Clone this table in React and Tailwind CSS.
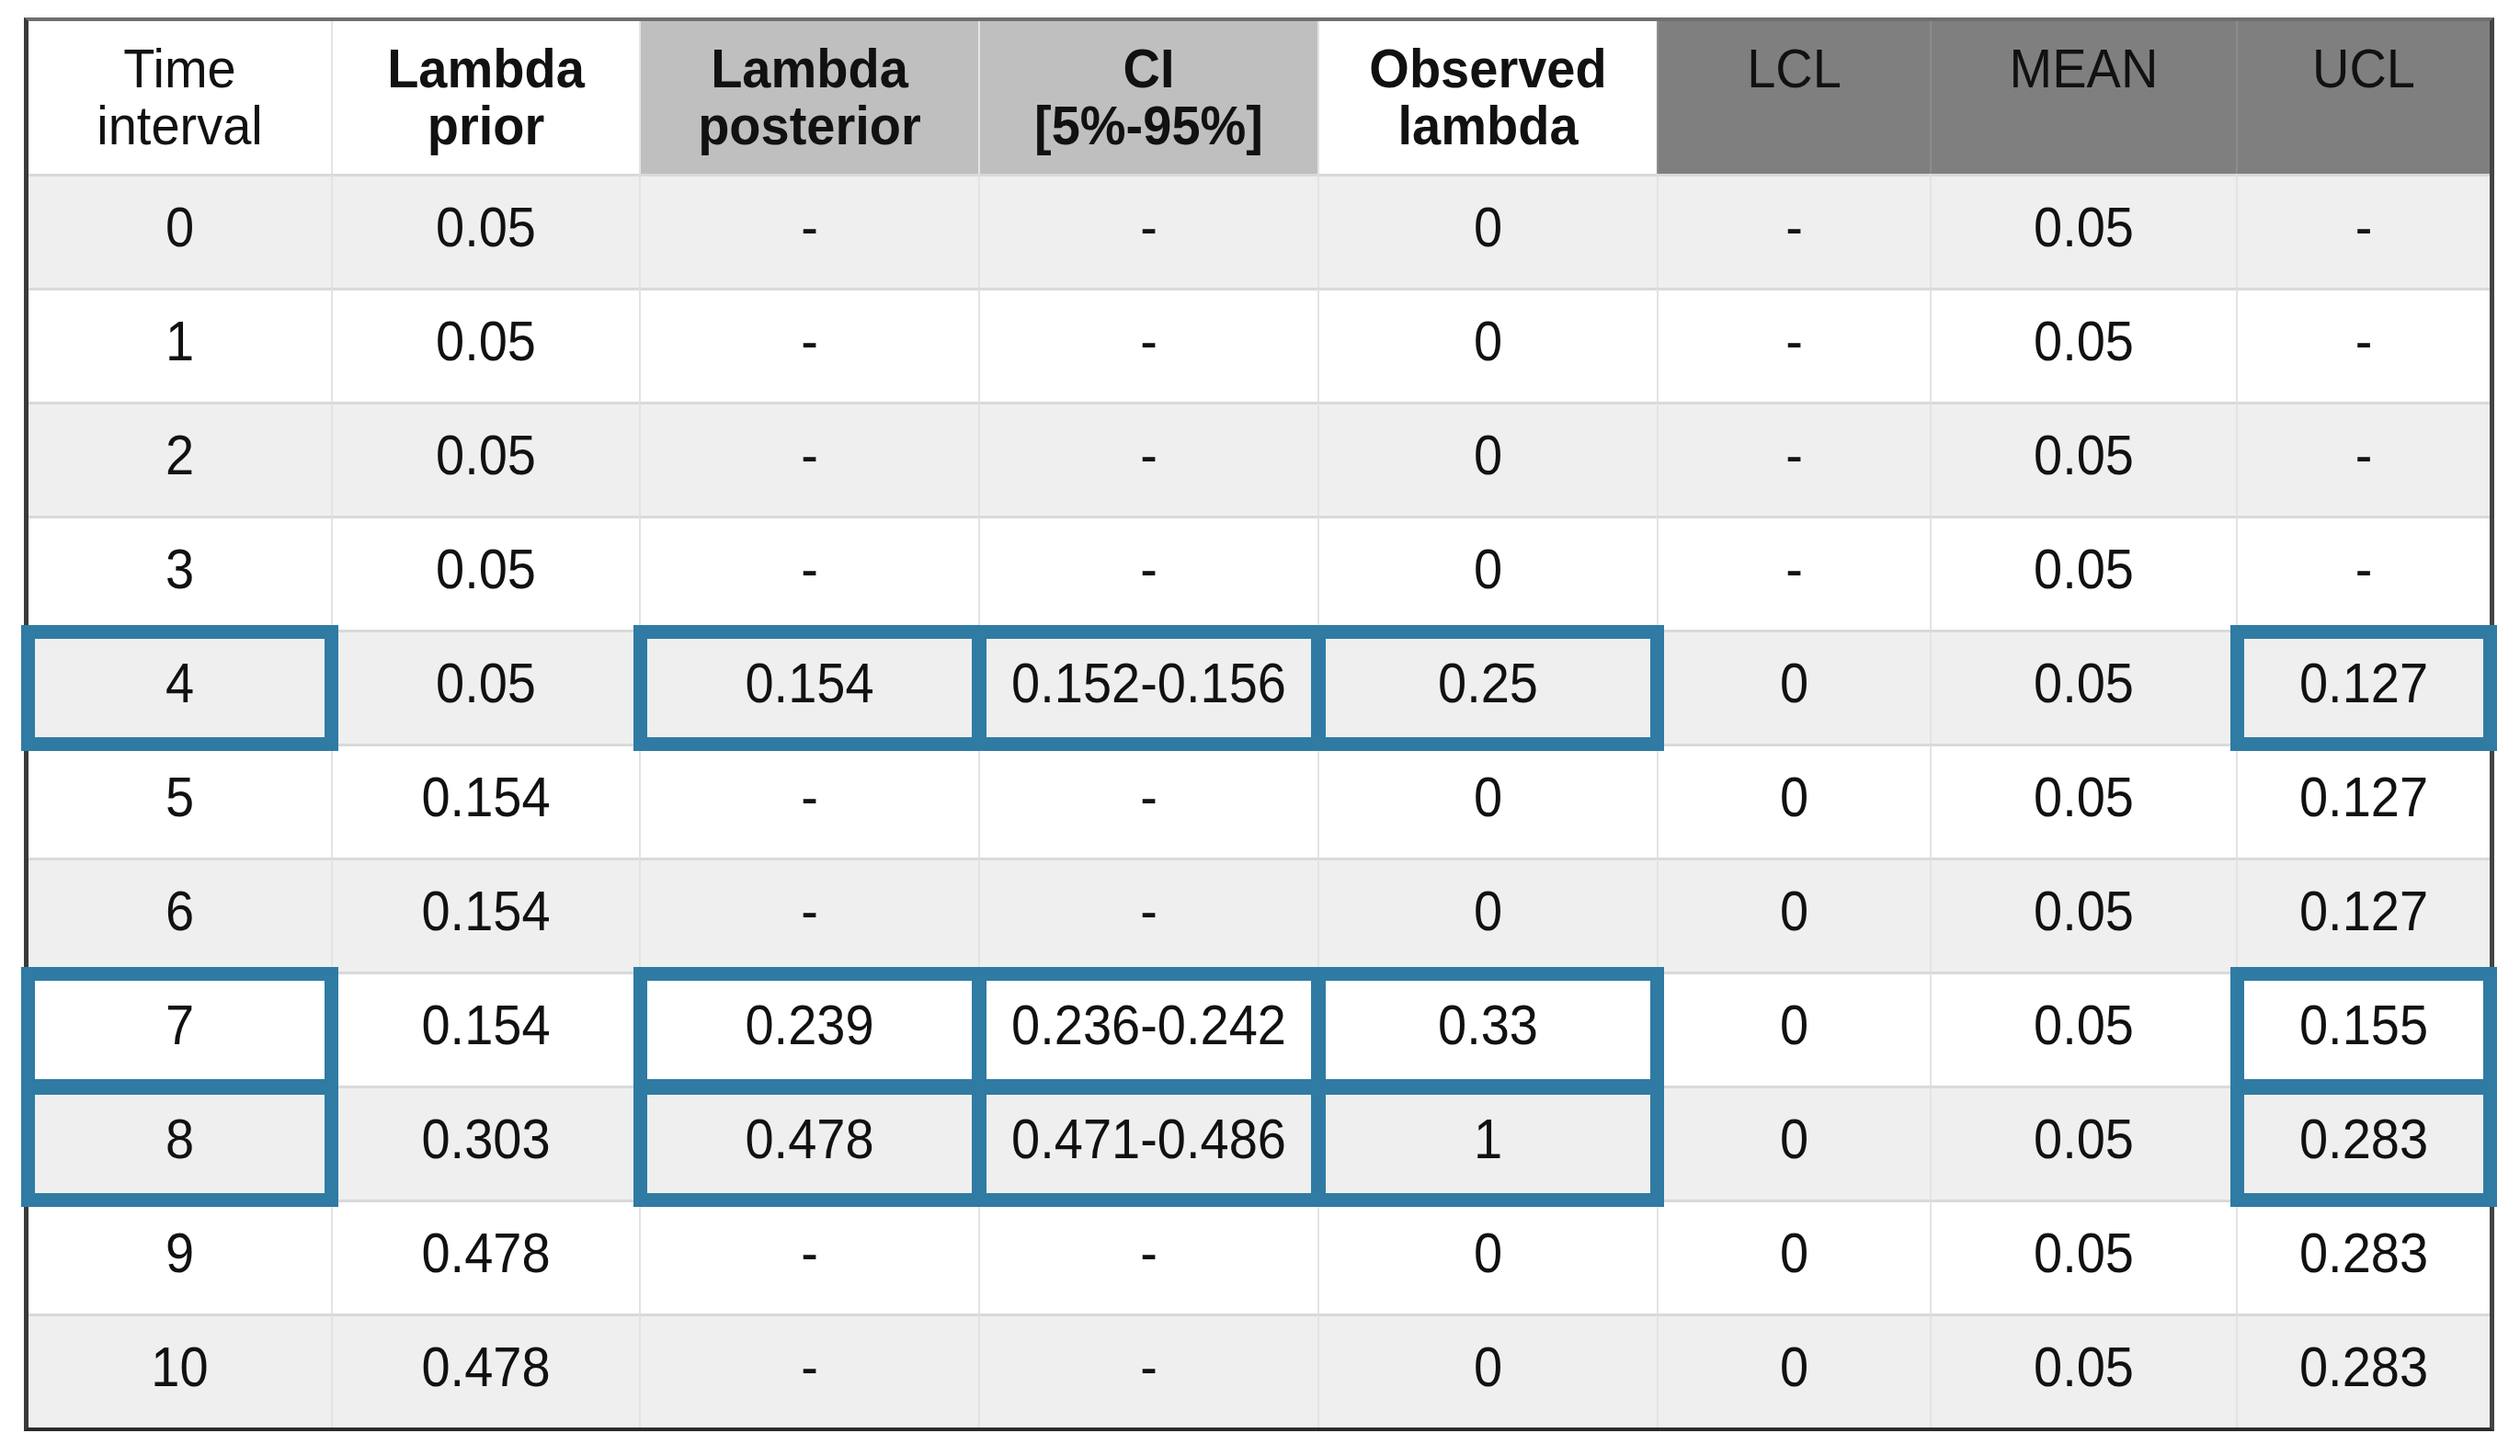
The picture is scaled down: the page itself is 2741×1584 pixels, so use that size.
import React from "react";

const columns = [
  { label: ["Time", "interval"], bold: false, bg: "bg-white" },
  { label: ["Lambda", "prior"], bold: true, bg: "bg-white" },
  { label: ["Lambda", "posterior"], bold: true, bg: "bg-[#bfbfbf]" },
  { label: ["CI", "[5%-95%]"], bold: true, bg: "bg-[#bfbfbf]" },
  { label: ["Observed", "lambda"], bold: true, bg: "bg-white" },
  { label: ["LCL"], bold: false, bg: "bg-[#7f7f7f]" },
  { label: ["MEAN"], bold: false, bg: "bg-[#7f7f7f]" },
  { label: ["UCL"], bold: false, bg: "bg-[#7f7f7f]" },
];

const rows = [
  ["0", "0.05", "-", "-", "0", "-", "0.05", "-"],
  ["1", "0.05", "-", "-", "0", "-", "0.05", "-"],
  ["2", "0.05", "-", "-", "0", "-", "0.05", "-"],
  ["3", "0.05", "-", "-", "0", "-", "0.05", "-"],
  ["4", "0.05", "0.154", "0.152-0.156", "0.25", "0", "0.05", "0.127"],
  ["5", "0.154", "-", "-", "0", "0", "0.05", "0.127"],
  ["6", "0.154", "-", "-", "0", "0", "0.05", "0.127"],
  ["7", "0.154", "0.239", "0.236-0.242", "0.33", "0", "0.05", "0.155"],
  ["8", "0.303", "0.478", "0.471-0.486", "1", "0", "0.05", "0.283"],
  ["9", "0.478", "-", "-", "0", "0", "0.05", "0.283"],
  ["10", "0.478", "-", "-", "0", "0", "0.05", "0.283"],
];

// rows with a change get their key cells boxed in blue
const boxedRows = [4, 7, 8];
const boxedCols = [0, 2, 3, 4, 7];

const HeaderCell = ({ col, index }) => {
  const dark = index >= 5;
  return (
    <div
      className={`${col.bg} ${
        index > 0 ? (dark ? "border-l-2 border-[#8c8c8c]" : "border-l-2 border-[#e4e4e4]") : ""
      } flex flex-col items-center pt-[21px] text-[56px] leading-[62px] text-[#111] ${
        col.bold ? "font-bold" : "font-normal"
      }`}
    >
      {col.label.map((line) => (
        <span key={line} className="inline-block scale-y-[1.06]">
          {line}
        </span>
      ))}
    </div>
  );
};

const BodyCell = ({ value, row, col }) => {
  const boxed = boxedRows.includes(row) && boxedCols.includes(col);
  return (
    <div
      className={`relative flex items-center justify-center pb-3 border-t-[3px] border-[#d9d9d9] ${
        col > 0 ? "border-l-2 border-l-[#e3e3e3]" : ""
      } ${row % 2 === 0 ? "bg-[#efefef]" : "bg-white"} text-[56px] text-[#111]`}
    >
      <span className="inline-block scale-y-[1.08]">{value}</span>
      {boxed && (
        <div className="pointer-events-none absolute -inset-[8px] z-10 border-[15px] border-[#2f7ba4]" />
      )}
    </div>
  );
};

export default function App() {
  return (
    <div className="min-h-screen bg-white pt-[19px] pl-[26px]" style={{ fontFamily: '"Liberation Sans", Arial, sans-serif' }}>
      <div className="inline-block border-t-4 border-t-[#6f6f6f] border-l-[5px] border-l-[#3a3a3a] border-r-[5px] border-r-[#444444] border-b-4 border-b-[#2b2b2b]">
        <div className="grid grid-cols-[329px_335px_369px_369px_369px_297px_333px_276px] grid-rows-[166px_repeat(11,124px)]">
          {columns.map((col, i) => (
            <HeaderCell key={i} col={col} index={i} />
          ))}
          {rows.map((r, ri) =>
            r.map((v, ci) => <BodyCell key={`${ri}-${ci}`} value={v} row={ri} col={ci} />)
          )}
        </div>
      </div>
    </div>
  );
}
